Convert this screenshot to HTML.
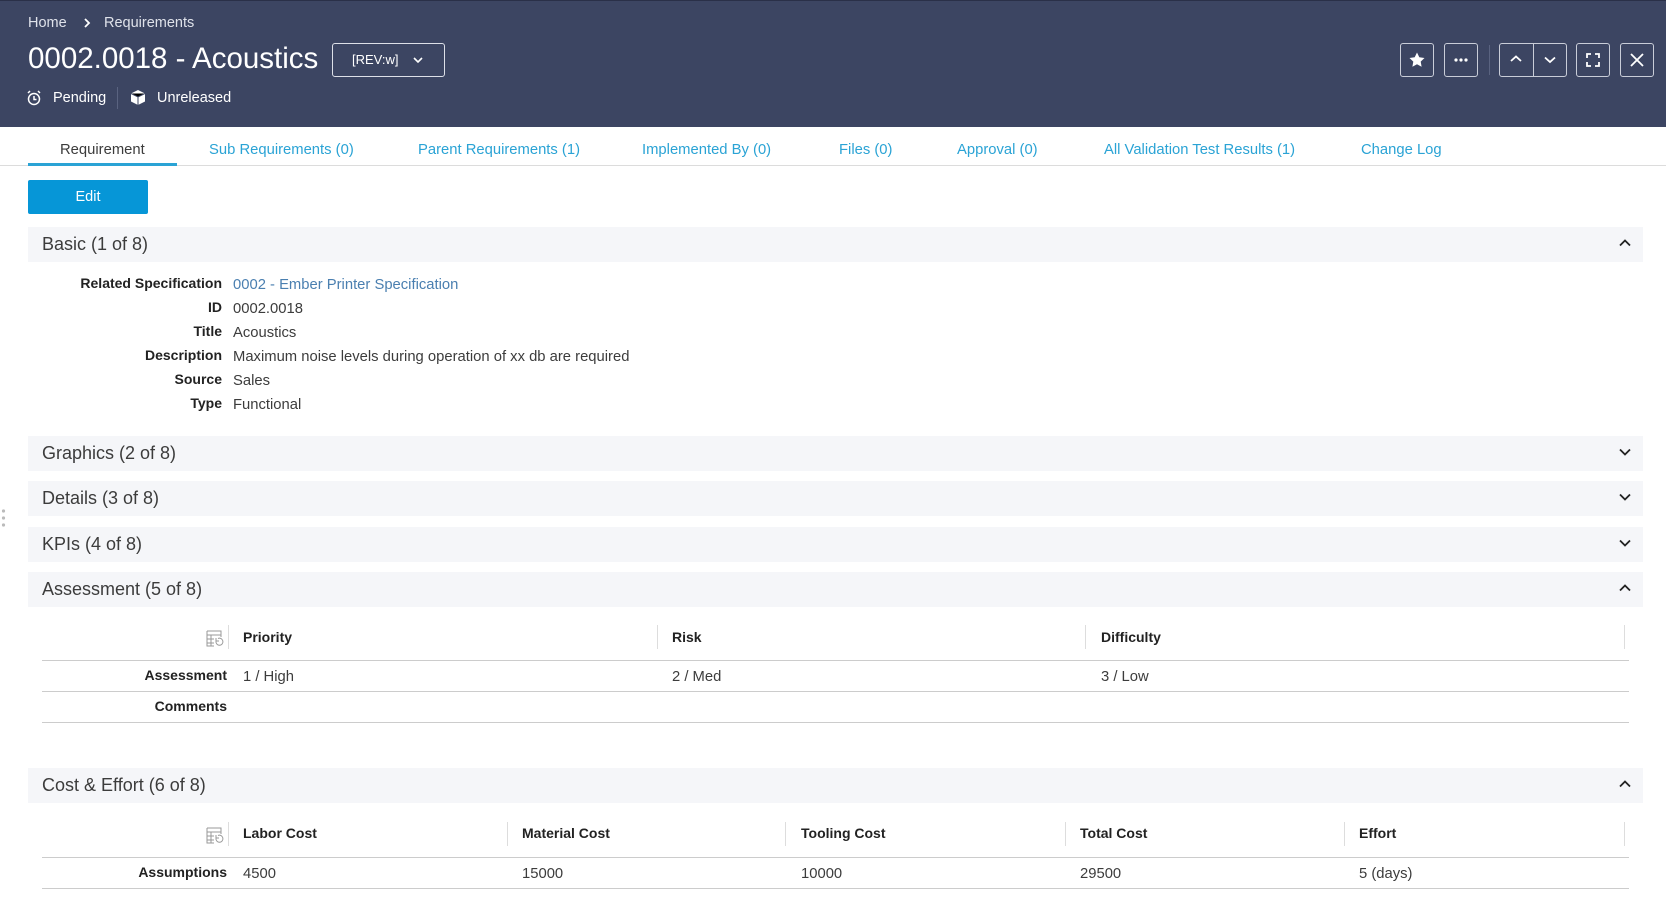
<!DOCTYPE html>
<html><head><meta charset="utf-8"><style>
*{margin:0;padding:0;box-sizing:border-box}
body{width:1666px;height:905px;overflow:hidden;background:#fff;font-family:"Liberation Sans",sans-serif;color:#3c3c3c;position:relative;font-size:14px}
.a{position:absolute;white-space:nowrap}
.hdr{position:absolute;left:0;top:0;width:1666px;height:127px;background:#3c4562;border-top:1px solid #2a3048}
.w{color:#fff}
.btn{position:absolute;top:43px;width:34px;height:34px;border:1px solid #c9cdd8;border-radius:3px}
.tab{position:absolute;top:142px;font-size:14.8px;color:#2aa3d5}
.sec{position:absolute;left:28px;width:1615px;height:35px;background:#f5f6f9}
.sec span{position:absolute;left:14px;top:7px;font-size:18px;color:#3c3c3c}
.sec svg{position:absolute;right:12px;top:12px}
.lbl{position:absolute;text-align:right;width:200px;left:22px;font-weight:bold;font-size:14px;color:#222;margin-top:-1px}
.val{position:absolute;left:233px;font-size:14.8px;color:#3c3c3c;margin-top:1px}
.hl{position:absolute;height:1px;background:#ccc}
.vl{position:absolute;width:1px;background:#ddd}
.th{position:absolute;font-size:14px;font-weight:bold;color:#222}
</style></head><body>
<div class="hdr"></div>
<div class="a w" style="left:28px;top:15px;font-size:14.5px;color:#dfe2ea">Home</div>
<svg class="a" style="left:83px;top:18px" width="8" height="10"><path d="M2 1l4 4-4 4" stroke="#fff" stroke-width="1.8" fill="none"/></svg>
<div class="a w" style="left:104px;top:15px;font-size:14.5px;color:#dfe2ea">Requirements</div>
<div class="a w" style="left:28px;top:42px;font-size:29.5px">0002.0018 - Acoustics</div>
<div class="a" style="left:332px;top:43px;width:113px;height:34px;border:1px solid #dde0e8;border-radius:3px"></div>
<div class="a w" style="left:352px;top:52px;font-size:13px">[REV:w]</div>
<svg class="a" style="left:413px;top:57px" width="10" height="7"><path d="M1 1l4 4 4-4" stroke="#fff" stroke-width="1.6" fill="none"/></svg>
<svg class="a" style="left:26px;top:90px" width="16" height="16"><circle cx="8" cy="9" r="5.5" stroke="#fff" stroke-width="1.5" fill="none"/><path d="M8 6v3.5h2.5M2 3l2-2M14 3l-2-2" stroke="#fff" stroke-width="1.5" fill="none"/></svg>
<div class="a w" style="left:53px;top:90px;font-size:14.5px">Pending</div>
<div class="a" style="left:117px;top:87px;width:1px;height:22px;background:#5a6380"></div>
<svg class="a" style="left:130px;top:89px" width="16" height="17"><path d="M8 1l7 3.5v8L8 16 1 12.5v-8z" fill="#fff"/><path d="M1 4.5L8 8l7-3.5M8 8v8" stroke="#3c4562" stroke-width="1"/></svg>
<div class="a w" style="left:157px;top:90px;font-size:14.5px">Unreleased</div>
<div class="btn" style="left:1400px"></div>
<svg class="a" style="left:1408px;top:51px" width="18" height="18"><path d="M9 1.5l2.3 4.8 5.2.7-3.8 3.6.9 5.2L9 13.3 4.4 15.8l.9-5.2L1.5 7l5.2-.7z" fill="#fff"/></svg>
<div class="btn" style="left:1444px"></div>
<svg class="a" style="left:1452px;top:57px" width="18" height="6"><circle cx="4" cy="3" r="1.6" fill="#fff"/><circle cx="9" cy="3" r="1.6" fill="#fff"/><circle cx="14" cy="3" r="1.6" fill="#fff"/></svg>
<div class="a" style="left:1489px;top:45px;width:1px;height:30px;background:#5a6380"></div>
<div class="btn" style="left:1499px;width:68px"></div>
<div class="a" style="left:1533px;top:43px;width:1px;height:34px;background:#c9cdd8"></div>
<svg class="a" style="left:1510px;top:55px" width="12" height="8"><path d="M1 6l5-4.5 5 4.5" stroke="#fff" stroke-width="1.8" fill="none"/></svg>
<svg class="a" style="left:1544px;top:56px" width="12" height="8"><path d="M1 1.5l5 4.5 5-4.5" stroke="#fff" stroke-width="1.8" fill="none"/></svg>
<div class="btn" style="left:1576px"></div>
<svg class="a" style="left:1586px;top:53px" width="14" height="14"><path d="M1 5V1h4M9 1h4v4M13 9v4H9M5 13H1V9" stroke="#fff" stroke-width="1.8" fill="none"/></svg>
<div class="btn" style="left:1620px"></div>
<svg class="a" style="left:1629px;top:52px" width="16" height="16"><path d="M2 2l12 12M14 2L2 14" stroke="#fff" stroke-width="1.8"/></svg>

<div class="a" style="left:0;top:165px;width:1666px;height:1px;background:#dcdcdc"></div>
<div class="a" style="left:28px;top:163px;width:149px;height:3px;background:#2aa3d5"></div>
<div class="tab" style="left:60px;color:#3c3c3c">Requirement</div>
<div class="tab" style="left:209px">Sub Requirements (0)</div>
<div class="tab" style="left:418px">Parent Requirements (1)</div>
<div class="tab" style="left:642px">Implemented By (0)</div>
<div class="tab" style="left:839px">Files (0)</div>
<div class="tab" style="left:957px">Approval (0)</div>
<div class="tab" style="left:1104px">All Validation Test Results (1)</div>
<div class="tab" style="left:1361px">Change Log</div>

<div class="a" style="left:28px;top:180px;width:120px;height:34px;background:#0696d7;border-radius:2px;color:#fff;text-align:center;line-height:34px;font-size:14.5px">Edit</div>

<div class="sec" style="top:227px"><span>Basic (1 of 8)</span><svg width="12" height="8"><path d="M1 6.5l5-5 5 5" stroke="#222" stroke-width="1.8" fill="none"/></svg></div>
<div class="lbl" style="top:276px">Related Specification</div><div class="val" style="top:276px;color:#4a7fb0">0002 - Ember Printer Specification</div>
<div class="lbl" style="top:300px">ID</div><div class="val" style="top:300px">0002.0018</div>
<div class="lbl" style="top:324px">Title</div><div class="val" style="top:324px">Acoustics</div>
<div class="lbl" style="top:348px">Description</div><div class="val" style="top:348px">Maximum noise levels during operation of xx db are required</div>
<div class="lbl" style="top:372px">Source</div><div class="val" style="top:372px">Sales</div>
<div class="lbl" style="top:396px">Type</div><div class="val" style="top:396px">Functional</div>

<div class="sec" style="top:436px"><span>Graphics (2 of 8)</span><svg width="12" height="8"><path d="M1 1.5l5 5 5-5" stroke="#222" stroke-width="1.8" fill="none"/></svg></div>
<div class="sec" style="top:481px"><span>Details (3 of 8)</span><svg width="12" height="8"><path d="M1 1.5l5 5 5-5" stroke="#222" stroke-width="1.8" fill="none"/></svg></div>
<div class="sec" style="top:527px"><span>KPIs (4 of 8)</span><svg width="12" height="8"><path d="M1 1.5l5 5 5-5" stroke="#222" stroke-width="1.8" fill="none"/></svg></div>
<div class="sec" style="top:572px"><span>Assessment (5 of 8)</span><svg width="12" height="8"><path d="M1 6.5l5-5 5 5" stroke="#222" stroke-width="1.8" fill="none"/></svg></div>

<svg class="a" style="left:206px;top:630px" width="18" height="18"><path d="M1 1h14v6M1 1v15h7M1 5h14M1 9h7M1 13h7M5 5v11" stroke="#999" stroke-width="1" fill="none"/><path d="M10 11a3.5 3.5 0 1 0 2-2.5M10 8v3h3" stroke="#999" stroke-width="1" fill="none"/></svg>
<div class="vl" style="left:228px;top:625px;height:24px"></div>
<div class="vl" style="left:657px;top:625px;height:24px"></div>
<div class="vl" style="left:1085px;top:625px;height:24px"></div>
<div class="vl" style="left:1624px;top:625px;height:24px"></div>
<div class="th" style="left:243px;top:629px">Priority</div>
<div class="th" style="left:672px;top:629px">Risk</div>
<div class="th" style="left:1101px;top:629px">Difficulty</div>
<div class="hl" style="left:42px;width:1587px;top:660px"></div>
<div class="lbl" style="top:668px;left:27px">Assessment</div><div class="val" style="top:668px;left:243px">1 / High</div>
<div class="val" style="top:668px;left:672px">2 / Med</div><div class="val" style="top:668px;left:1101px">3 / Low</div>
<div class="hl" style="left:42px;width:1587px;top:691px"></div>
<div class="lbl" style="top:699px;left:27px">Comments</div>
<div class="hl" style="left:42px;width:1587px;top:722px"></div>

<div class="sec" style="top:768px"><span>Cost &amp; Effort (6 of 8)</span><svg width="12" height="8"><path d="M1 6.5l5-5 5 5" stroke="#222" stroke-width="1.8" fill="none"/></svg></div>
<svg class="a" style="left:206px;top:827px" width="18" height="18"><path d="M1 1h14v6M1 1v15h7M1 5h14M1 9h7M1 13h7M5 5v11" stroke="#999" stroke-width="1" fill="none"/><path d="M10 11a3.5 3.5 0 1 0 2-2.5M10 8v3h3" stroke="#999" stroke-width="1" fill="none"/></svg>
<div class="vl" style="left:228px;top:822px;height:24px"></div>
<div class="vl" style="left:507px;top:822px;height:24px"></div>
<div class="vl" style="left:785px;top:822px;height:24px"></div>
<div class="vl" style="left:1065px;top:822px;height:24px"></div>
<div class="vl" style="left:1344px;top:822px;height:24px"></div>
<div class="vl" style="left:1624px;top:822px;height:24px"></div>
<div class="th" style="left:243px;top:825px">Labor Cost</div>
<div class="th" style="left:522px;top:825px">Material Cost</div>
<div class="th" style="left:801px;top:825px">Tooling Cost</div>
<div class="th" style="left:1080px;top:825px">Total Cost</div>
<div class="th" style="left:1359px;top:825px">Effort</div>
<div class="hl" style="left:42px;width:1587px;top:857px"></div>
<div class="lbl" style="top:865px;left:27px">Assumptions</div>
<div class="val" style="top:865px;left:243px">4500</div>
<div class="val" style="top:865px;left:522px">15000</div>
<div class="val" style="top:865px;left:801px">10000</div>
<div class="val" style="top:865px;left:1080px">29500</div>
<div class="val" style="top:865px;left:1359px">5 (days)</div>
<div class="hl" style="left:42px;width:1587px;top:888px"></div>

<svg class="a" style="left:1px;top:508px" width="5" height="22"><circle cx="2.5" cy="3" r="1.6" fill="#bbb"/><circle cx="2.5" cy="10" r="1.6" fill="#bbb"/><circle cx="2.5" cy="17" r="1.6" fill="#bbb"/></svg>
</body></html>
